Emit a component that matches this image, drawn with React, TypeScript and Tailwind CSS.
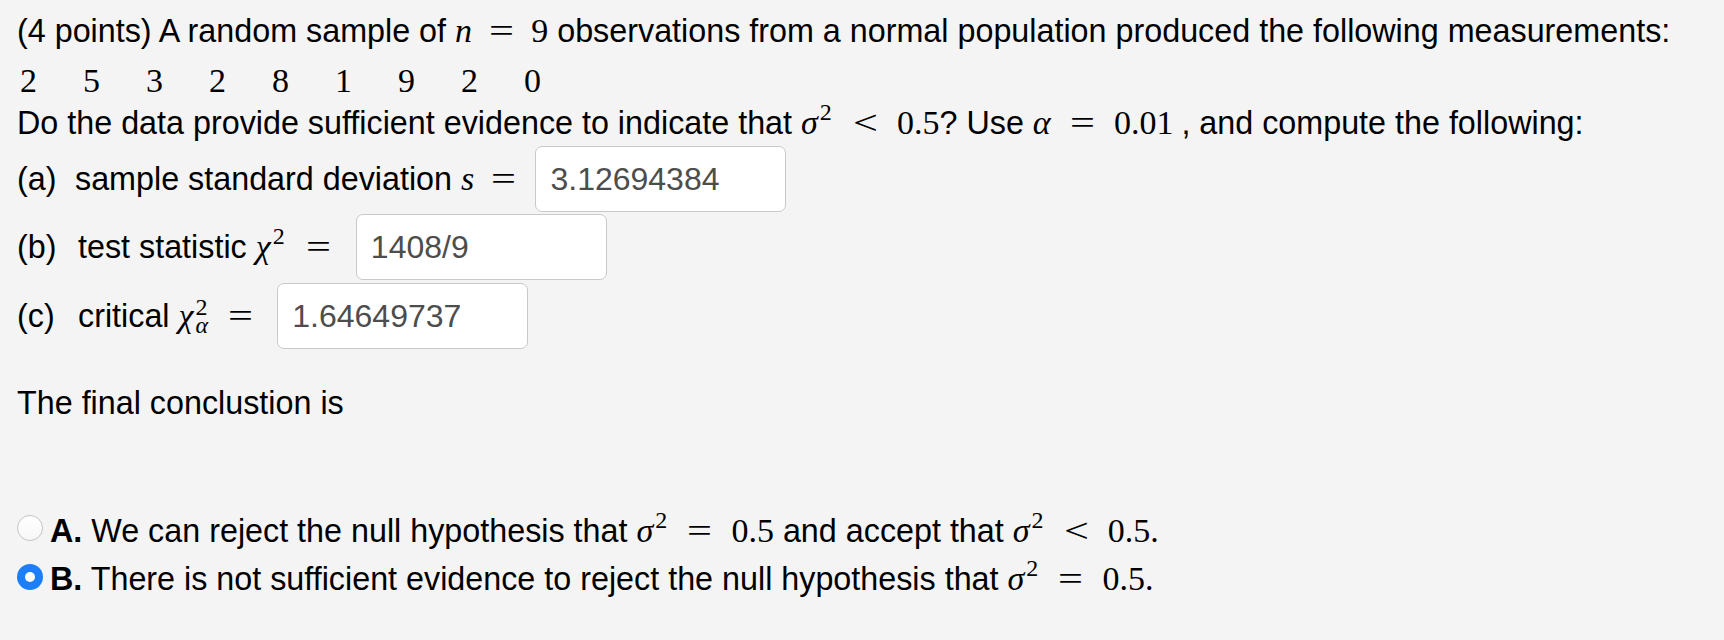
import React from 'react';

const serif = "font-['Liberation_Serif',serif] text-[34px]";

function MI({ children }: { children: React.ReactNode }) {
  return <span className={`${serif} italic`}>{children}</span>;
}

function MN({ children, className }: { children: React.ReactNode; className?: string }) {
  return <span className={`${serif} ${className ?? ''}`}>{children}</span>;
}

// relation sign (=, <) with TeX-like spacing on both sides
function Rel({ children, className }: { children: React.ReactNode; className?: string }) {
  return (
    <span className={`${serif} inline-block scale-x-[1.3] ${className ?? 'mx-[21px]'}`}>{children}</span>
  );
}

function Sup({ children }: { children: React.ReactNode }) {
  return (
    <span className="font-['Liberation_Serif',serif] text-[24px] leading-[0] align-[14px] ml-[2px]">
      {children}
    </span>
  );
}

function Answer({ value, className }: { value: string; className?: string }) {
  return (
    <input
      readOnly
      value={value}
      className={`w-[251px] h-[66px] rounded-[7px] border border-[#c9c9c9] bg-white px-[14px] text-[32px] text-[#4d4d4d] outline-none ${className ?? ''}`}
    />
  );
}

function Radio({ checked }: { checked?: boolean }) {
  if (checked) {
    return (
      <span className="w-[26px] h-[26px] rounded-full bg-[#1b80f8] flex items-center justify-center shrink-0 mb-[5px]">
        <span className="w-[10px] h-[10px] rounded-full bg-white" />
      </span>
    );
  }
  return (
    <span className="w-[26px] h-[26px] rounded-full border border-[#c4c4c4] bg-gradient-to-b from-white to-[#f7f7f7] shrink-0 mb-[6px]" />
  );
}

export default function App() {
  const data = ['2', '5', '3', '2', '8', '1', '9', '2', '0'];

  return (
    <div className="w-full h-[640px] bg-[#f4f4f4] text-black font-['Liberation_Sans',Arial,sans-serif] text-[32.3px] pl-[17px] pt-[13px] whitespace-nowrap">
      <div className="leading-[36px]">
        (4 points) A random sample of <MI>n</MI>
        <Rel className="mx-[20px]">=</Rel>
        <MN>9</MN> observations from a normal population produced the following measurements:
      </div>

      <div className={`${serif} flex leading-[34px] mt-[15px] pl-[3px]`}>
        {data.map((d, i) => (
          <span key={i} className="w-[63px]">
            {d}
          </span>
        ))}
      </div>

      <div className="leading-[36px] mt-[7px]">
        Do the data provide sufficient evidence to indicate that <MI>σ</MI>
        <Sup>2</Sup>
        <Rel className="ml-[24px] mr-[22px]">&lt;</Rel>
        <MN>0.5</MN>? Use <MI>α</MI>
        <Rel className="mx-[22px]">=</Rel>
        <MN>0.01</MN>
        <span className="ml-[8px]">, and compute the following:</span>
      </div>

      <div className="flex items-center h-[66px] mt-[5px]">
        <div className="leading-[36px]">
          <span className="inline-block w-[58px]">(a)</span>sample standard deviation <MI>s</MI>
          <Rel className="mx-[20px]">=</Rel>
        </div>
        <Answer value="3.12694384" className="ml-[2px]" />
      </div>

      <div className="flex items-center h-[66px] mt-[2px]">
        <div className="leading-[36px]">
          <span className="inline-block w-[61px]">(b)</span>test statistic <MI>χ</MI>
          <Sup>2</Sup>
          <Rel className="ml-[24px] mr-[20px]">=</Rel>
        </div>
        <Answer value="1408/9" className="ml-[8px]" />
      </div>

      <div className="flex items-center h-[66px] mt-[3px]">
        <div className="leading-[36px]">
          <span className="inline-block w-[61px]">(c)</span>critical <MI>χ</MI>
          <span className="inline-flex flex-col font-['Liberation_Serif',serif] text-[24px] leading-[18px] align-[12px] ml-[2px]">
            <span>2</span>
            <span className="italic">α</span>
          </span>
          <Rel className="ml-[23px] mr-[20px]">=</Rel>
        </div>
        <Answer value="1.64649737" className="ml-[7px]" />
      </div>

      <div className="leading-[36px] mt-[36px]">The final conclustion is</div>

      <div className="flex items-center h-[48px] mt-[86px]">
        <Radio />
        <div className="leading-[36px] ml-[7px]">
          <b>A.</b> We can reject the null hypothesis that <MI>σ</MI>
          <Sup>2</Sup>
          <Rel className="ml-[23px] mr-[22px]">=</Rel>
          <MN>0.5</MN> and accept that <MI>σ</MI>
          <Sup>2</Sup>
          <Rel className="ml-[23px] mr-[22px]">&lt;</Rel>
          <MN>0.5.</MN>
        </div>
      </div>

      <div className="flex items-center h-[48px]">
        <Radio checked />
        <div className="leading-[36px] ml-[7px]">
          <b>B.</b> There is not sufficient evidence to reject the null hypothesis that <MI>σ</MI>
          <Sup>2</Sup>
          <Rel className="ml-[23px] mr-[22px]">=</Rel>
          <MN>0.5.</MN>
        </div>
      </div>
    </div>
  );
}
